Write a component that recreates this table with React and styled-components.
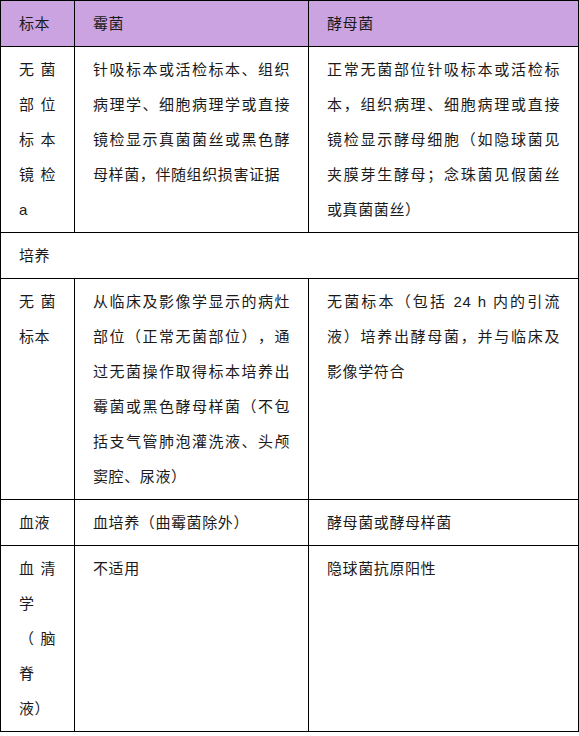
import React from 'react';
import styled, { createGlobalStyle } from 'styled-components';

const GlobalStyle = createGlobalStyle`
	html, body {
		margin: 0;
		padding: 0;
		background: #ffffff;
	}
	body {
		font-family: "Liberation Sans", "Noto Sans CJK SC", sans-serif;
	}
`;

const rows = [
	{
		label: '无菌部位标本镜检a',
		mold: '针吸标本或活检标本、组织病理学、细胞病理学或直接镜检显示真菌菌丝或黑色酵母样菌，伴随组织损害证据',
		yeast: '正常无菌部位针吸标本或活检标本，组织病理、细胞病理或直接镜检显示酵母细胞（如隐球菌见夹膜芽生酵母；念珠菌见假菌丝或真菌菌丝）',
	},
	{ section: '培养' },
	{
		label: '无菌标本',
		mold: '从临床及影像学显示的病灶部位（正常无菌部位），通过无菌操作取得标本培养出霉菌或黑色酵母样菌（不包括支气管肺泡灌洗液、头颅窦腔、尿液）',
		yeast: '无菌标本（包括 24 h 内的引流液）培养出酵母菌，并与临床及影像学符合',
	},
	{
		label: '血液',
		mold: '血培养（曲霉菌除外）',
		yeast: '酵母菌或酵母样菌',
	},
	{
		label: '血清学（脑脊液）',
		mold: '不适用',
		yeast: '隐球菌抗原阳性',
	},
];

export default function App() {
	return (
		<>
			<GlobalStyle />
			<Table>
				<colgroup>
					<col style={{ width: '74px' }} />
					<col style={{ width: '234px' }} />
					<col style={{ width: '270px' }} />
				</colgroup>
				<thead>
					<tr>
						<HeadCell>标本</HeadCell>
						<HeadCell>霉菌</HeadCell>
						<HeadCell>酵母菌</HeadCell>
					</tr>
				</thead>
				<tbody>
					{rows.map((row, i) =>
						row.section ? (
							<tr key={i}>
								<Cell colSpan={3}>{row.section}</Cell>
							</tr>
						) : (
							<tr key={i}>
								<Cell>{row.label}</Cell>
								<Cell>{row.mold}</Cell>
								<Cell>{row.yeast}</Cell>
							</tr>
						)
					)}
				</tbody>
			</Table>
		</>
	);
}

const Table = styled.table`
	width: 578px;
	table-layout: fixed;
	border-collapse: collapse;
	color: #1a1a1a;
	font-size: 15px;
	letter-spacing: 0.6px;
	line-height: 35px;
	text-spacing-trim: space-all;
`;

const Cell = styled.td`
	border: 1px solid #000000;
	padding: 5px 18px 5px 18px;
	vertical-align: top;
	text-align: justify;
	word-break: normal;
	line-break: strict;
`;

const HeadCell = styled(Cell).attrs({ as: 'th' })`
	background-color: #cba3e0;
	font-weight: normal;
	text-align: left;
`;
